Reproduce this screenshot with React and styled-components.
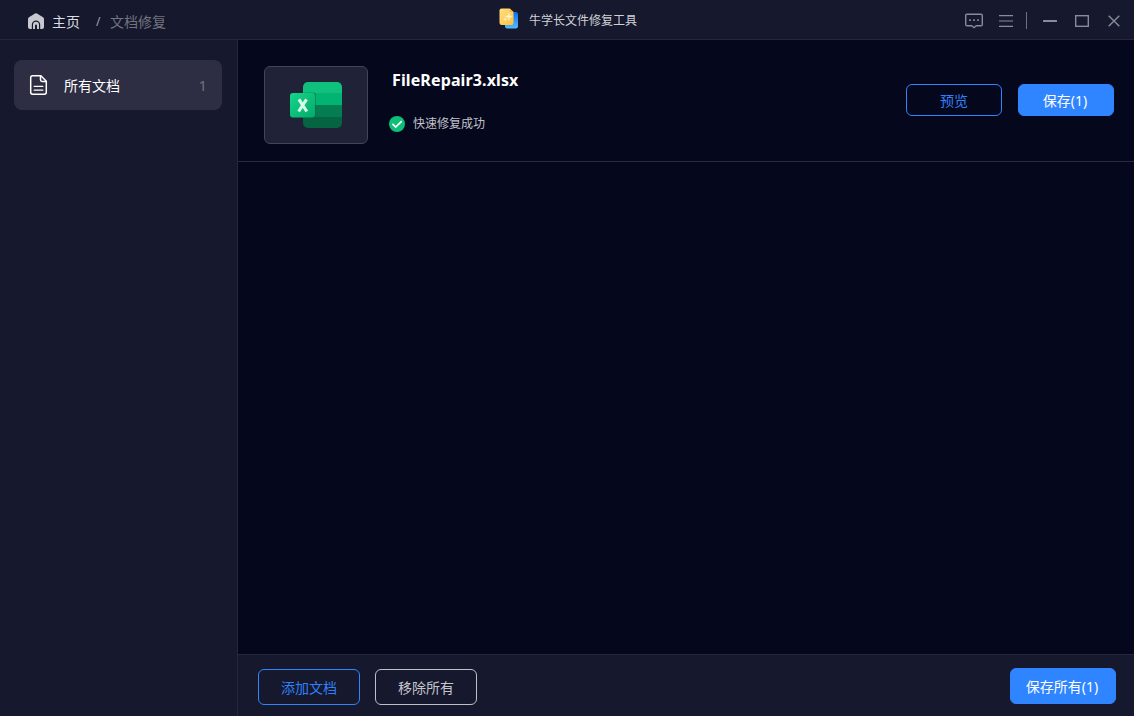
import React from "react";
import styled, { createGlobalStyle } from "styled-components";

const GlobalStyle = createGlobalStyle`
  * { box-sizing: border-box; }
  body {
    margin: 0;
    background: #05071c;
    font-family: "Noto Sans", "Noto Sans CJK SC", sans-serif;
  }
`;

const Window = styled.div`
  display: flex;
  flex-direction: column;
  width: 100%;
  height: 716px;
  overflow: hidden;
  color: #fff;
  background: #05071c;
`;

const TitleBar = styled.header`
  display: grid;
  grid-template-columns: 1fr auto 1fr;
  flex: none;
  height: 40px;
  background: #16182d;
  border-bottom: 1px solid #262839;
`;

const Breadcrumb = styled.nav`
  display: flex;
  align-items: center;
  padding: 5px 0 0 28px;
  font-size: 14px;
  line-height: 20px;
  white-space: nowrap;

  svg { margin-bottom: 2px; }
`;

const HomeLink = styled.span`
  margin-left: 8px;
  color: #dcdce2;
`;

const Slash = styled.span`
  width: 5px;
  margin: 0 9px 0 16px;
  font-size: 12px;
  color: #a2a3ad;
`;

const Current = styled.span`
  color: #73747f;
`;

const AppTitle = styled.div`
  display: flex;
  align-items: center;
  gap: 10px;
  padding: 3px 0 0 2px;
  font-size: 12px;
  line-height: 18px;
  color: #d0d1d6;

  svg { margin-bottom: 6px; }
`;

const WindowControls = styled.div`
  display: flex;
  align-items: center;
  justify-content: flex-end;
  padding: 2px 10px 0 0;
  color: #8a8b99;
`;

const Control = styled.span`
  display: flex;
  align-items: center;
  justify-content: center;
  width: 20px;
  height: 20px;
  margin-left: 12px;
`;

const Separator = styled.i`
  width: 1px;
  height: 17px;
  margin-left: 10px;
  margin-right: 1px;
  background: #707180;
`;

const Body = styled.div`
  display: flex;
  flex: 1;
  min-height: 0;
`;

const Sidebar = styled.aside`
  flex: none;
  width: 238px;
  padding: 20px 15px 0 14px;
  background: #16182d;
  border-right: 1px solid #262839;
`;

const SideItem = styled.div`
  display: flex;
  align-items: center;
  height: 50px;
  padding: 0 15px 0 15px;
  border-radius: 8px;
  background: #2d2d43;
  font-size: 14px;
  line-height: 20px;
`;

const SideLabel = styled.span`
  flex: 1;
  margin-left: 16px;
  padding-top: 2px;
`;

const SideCount = styled.span`
  font-size: 15px;
  color: #70717e;
`;

const Main = styled.main`
  display: flex;
  flex: 1;
  flex-direction: column;
  min-width: 0;
`;

const FileRow = styled.section`
  display: flex;
  align-items: flex-start;
  height: 122px;
  padding: 26px 20px 0 26px;
  border-bottom: 1px solid #292b3a;
`;

const Thumbnail = styled.div`
  display: flex;
  align-items: center;
  justify-content: center;
  width: 104px;
  height: 78px;
  border: 1px solid #424559;
  border-radius: 6px;
  background: #202237;
`;

const FileInfo = styled.div`
  flex: 1;
  margin-left: 21px;
`;

const FileName = styled.h1`
  margin: 3px 0 0 3px;
  font-size: 16px;
  font-weight: 700;
  line-height: 22px;
  letter-spacing: 0.12px;
`;

const Status = styled.p`
  display: flex;
  align-items: center;
  gap: 8px;
  margin: 24px 0 0;
  font-size: 12px;
  line-height: 18px;
  color: #c1c2cb;
`;

const variants = {
  primary: "color: #fff; background: #2f84ff; border-color: #2f84ff; padding-right: 2px;",
  outline: "color: #2f80fa; background: transparent; border-color: #2f84ff;",
  neutral: "color: #c5c6cd; background: transparent; border-color: #bebfc8;",
};

const Button = styled.button`
  width: ${({ $width }) => $width}px;
  height: ${({ $height }) => $height}px;
  padding: 1px 0 0;
  border: 1px solid;
  border-radius: 6px;
  font: 14px/20px "Noto Sans", "Noto Sans CJK SC", sans-serif;
  ${({ $variant }) => variants[$variant]}
`;

const RowActions = styled.div`
  display: flex;
  gap: 16px;
  padding-top: 18px;
`;

const Workspace = styled.div`
  flex: 1;
`;

const Footer = styled.footer`
  display: flex;
  align-items: flex-start;
  gap: 15px;
  height: 62px;
  padding: 14px 18px 0 20px;
  background: #16182d;
  border-top: 1px solid #262839;
`;

const FooterEnd = styled.div`
  margin: -1px 0 0 auto;
`;

const HomeIcon = () => (
  <svg width="16" height="16" viewBox="0 0 16 16">
    <path fill="#c7c8d0" d="M7 .4Q8 0 9 .4L15 4.3Q16 5 16 6v8q0 2-2 2H2q-2 0-2-2V6q0-1 1-1.7Z" />
    <path fill="none" stroke="#16182d" strokeWidth="1.2" d="M4.4 16v-4.2a3.6 3.6 0 0 1 7.2 0V16" />
    <path fill="#16182d" d="M7 16v-3.6a1 1 0 0 1 2 0V16Z" />
  </svg>
);

const LogoIcon = () => (
  <svg width="20" height="21" viewBox="0 0 20 21">
    <defs>
      <linearGradient id="logoBlue" x1="0" y1="0" x2="0" y2="1">
        <stop stopColor="#086cf5" />
        <stop offset="1" stopColor="#55bdff" />
      </linearGradient>
      <linearGradient id="logoGold" x1="0" y1="0" x2="1" y2="1">
        <stop stopColor="#ffdf83" />
        <stop offset="1" stopColor="#ffc13d" />
      </linearGradient>
    </defs>
    <rect x="6" y="4" width="13" height="16.5" rx="2.2" fill="url(#logoBlue)" />
    <path d="M2.5.5h8.2L14.5 4v10.8q0 2.2-2.2 2.2H2.7Q.5 17 .5 14.8V2.5q0-2 2-2Z" fill="url(#logoGold)" />
    <path d="M10.7.5 14.5 4h-2.4q-1.4 0-1.4-1.4Z" fill="#efb33f" />
    <path d="M10 4.5c.2 3 .8 3.7 3.3 4-2.6.4-3.1 1.1-3.3 4-.3-2.7-1.1-3.5-3.8-4 2.7-.4 3.5-1.2 3.8-4Z" fill="#fff2c7" stroke="#fff2c7" strokeWidth=".5" />
    <path d="M6.3 9.3q.2 1.7 1.8 2-1.6.3-1.8 2-.3-1.7-2-2 1.7-.3 2-2Z" fill="#fff0bd" />
  </svg>
);

const ChatIcon = () => (
  <svg width="20" height="16" viewBox="0 0 20 16" fill="none" stroke="currentColor" strokeWidth="1.4">
    <path d="M3 1.2h14q1.3 0 1.3 1.3v9q0 1.3-1.3 1.3h-4.7L10 14.7l-2.3-1.9H3q-1.3 0-1.3-1.3v-9Q1.7 1.2 3 1.2Z" />
    <path d="M5.2 7.2h1.7m2.3 0h1.7m2.3 0h1.7" strokeWidth="1.7" />
  </svg>
);

const MenuIcon = () => (
  <svg width="14" height="12" viewBox="0 0 14 12" stroke="currentColor" strokeWidth="1.2">
    <path d="M0 .6h14M0 6h14M0 11.4h14" />
  </svg>
);

const MinimizeIcon = () => (
  <svg width="14" height="2" viewBox="0 0 14 2">
    <rect width="14" height="2" rx=".5" fill="currentColor" />
  </svg>
);

const MaximizeIcon = () => (
  <svg width="14" height="12" viewBox="0 0 14 12">
    <rect x=".7" y=".7" width="12.6" height="10.6" fill="none" stroke="currentColor" strokeWidth="1.4" />
  </svg>
);

const CloseIcon = () => (
  <svg width="12" height="12" viewBox="0 0 12 12" stroke="currentColor" strokeWidth="1.4">
    <path d="m.7.7 10.6 10.6M11.3.7.7 11.3" />
  </svg>
);

const DocumentIcon = () => (
  <svg width="19" height="20" viewBox="0 0 19 20" fill="none" stroke="#fff" strokeWidth="1.5" strokeLinejoin="round" strokeLinecap="round">
    <path d="M3.6.8h8.3l5.4 5.5v11q0 1.9-1.9 1.9H3.6q-1.9 0-1.9-1.9V2.7Q1.7.8 3.6.8Z" />
    <path d="M11.5 1v3.8q0 1.7 1.7 1.7H17" />
    <path d="M5.2 11.4h8.6M5.2 15.2h8.6" strokeWidth="1.3" />
  </svg>
);

const SpreadsheetIcon = () => (
  <svg width="52" height="48" viewBox="0 0 52 48">
    <defs>
      <clipPath id="book"><rect x="13" y="1" width="39" height="46" rx="5" /></clipPath>
      <linearGradient id="tile" x1="0" y1="0" x2="1" y2="1">
        <stop stopColor="#14d68b" />
        <stop offset="1" stopColor="#05a969" />
      </linearGradient>
    </defs>
    <g clipPath="url(#book)">
      <rect x="13" y="1" width="39" height="11.5" fill="#0fc17d" />
      <rect x="13" y="12" width="39" height="12" fill="#02b371" />
      <rect x="13" y="24" width="39" height="12" fill="#047d53" />
      <rect x="13" y="36" width="39" height="11" fill="#056442" />
      <rect x="13" y="11.5" width="13" height="25.5" rx="2" fill="#04613f" opacity=".4" />
    </g>
    <rect y="12" width="25" height="24.5" rx="3" fill="url(#tile)" />
    <path d="m8.9 18.3 7.9 12.2m-.3-12.2L8.6 30.5" fill="none" stroke="#d7fae9" strokeWidth="3.1" />
  </svg>
);

const SuccessIcon = () => (
  <svg width="16" height="16" viewBox="0 0 16 16">
    <circle cx="8" cy="8" r="8" fill="#0dbf78" />
    <path d="m3.4 7.9 3.3 3.2 6-5.9" fill="none" stroke="#fff" strokeWidth="1.7" />
  </svg>
);

export default function App() {
  return (
    <Window>
      <GlobalStyle />
      <TitleBar>
        <Breadcrumb>
          <HomeIcon />
          <HomeLink>主页</HomeLink>
          <Slash>/</Slash>
          <Current>文档修复</Current>
        </Breadcrumb>
        <AppTitle>
          <LogoIcon />
          牛学长文件修复工具
        </AppTitle>
        <WindowControls>
          <Control><ChatIcon /></Control>
          <Control><MenuIcon /></Control>
          <Separator />
          <Control><MinimizeIcon /></Control>
          <Control><MaximizeIcon /></Control>
          <Control><CloseIcon /></Control>
        </WindowControls>
      </TitleBar>
      <Body>
        <Sidebar>
          <SideItem>
            <DocumentIcon />
            <SideLabel>所有文档</SideLabel>
            <SideCount>1</SideCount>
          </SideItem>
        </Sidebar>
        <Main>
          <FileRow>
            <Thumbnail><SpreadsheetIcon /></Thumbnail>
            <FileInfo>
              <FileName>FileRepair3.xlsx</FileName>
              <Status><SuccessIcon />快速修复成功</Status>
            </FileInfo>
            <RowActions>
              <Button $variant="outline" $width={96} $height={32}>预览</Button>
              <Button $variant="primary" $width={96} $height={32}>保存(1)</Button>
            </RowActions>
          </FileRow>
          <Workspace />
          <Footer>
            <Button $variant="outline" $width={102} $height={36}>添加文档</Button>
            <Button $variant="neutral" $width={102} $height={36}>移除所有</Button>
            <FooterEnd>
              <Button $variant="primary" $width={106} $height={36}>保存所有(1)</Button>
            </FooterEnd>
          </Footer>
        </Main>
      </Body>
    </Window>
  );
}
